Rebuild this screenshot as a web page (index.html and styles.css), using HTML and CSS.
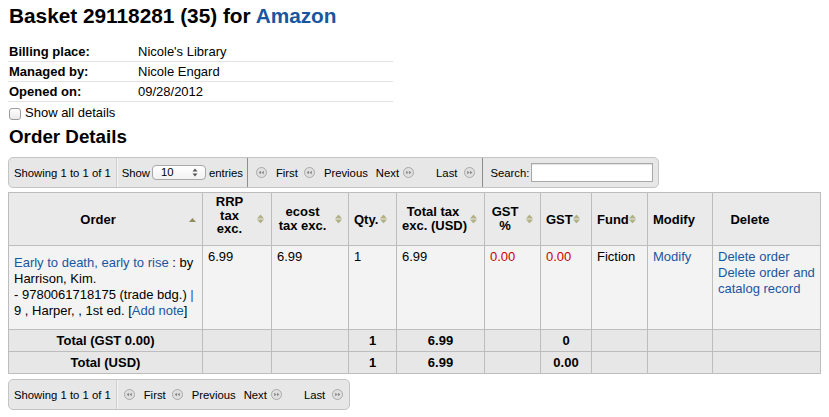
FILE: index.html
```html
<!DOCTYPE html>
<html>
<head>
<meta charset="utf-8">
<link rel="stylesheet" href="styles.css">
</head>
<body>
<div class="page">
  <h1 class="title">Basket 29118281 (35) for <a href="#" class="link">Amazon</a></h1>

  <div class="info">
    <div class="info-row"><span class="info-label">Billing place:</span><span>Nicole's Library</span></div>
    <div class="info-row"><span class="info-label">Managed by:</span><span>Nicole Engard</span></div>
    <div class="info-row"><span class="info-label">Opened on:</span><span>09/28/2012</span></div>
  </div>

  <label class="details-toggle"><input type="checkbox" class="check"> Show all details</label>

  <h2 class="subtitle">Order Details</h2>

  <div class="toolbar">
    <div class="seg seg-info">Showing 1 to 1 of 1</div>
    <div class="seg seg-length">Show <span class="select"><span class="select-val">10</span><svg class="select-arrows" width="6" height="9" viewBox="0 0 6 9"><path d="M3 0.5 L5.5 3.5 H0.5 Z M3 8.5 L5.5 5.5 H0.5 Z" fill="#555"/></svg></span> entries</div>
    <div class="seg seg-pager">
      <span class="pbtn pbtn-first"><svg class="picon" width="11" height="11" viewBox="0 0 11 11"><circle cx="5.5" cy="5.5" r="5" fill="#e0e0e0" stroke="#a9a9a9"/><path d="M2.6 5.5 L5 3.7 V7.3 Z M5.4 5.5 L7.8 3.7 V7.3 Z" fill="#8a8a8a"/></svg>First</span>
      <span class="pbtn pbtn-prev"><svg class="picon" width="11" height="11" viewBox="0 0 11 11"><circle cx="5.5" cy="5.5" r="5" fill="#e0e0e0" stroke="#a9a9a9"/><path d="M2.6 5.5 L5 3.7 V7.3 Z M5.4 5.5 L7.8 3.7 V7.3 Z" fill="#8a8a8a"/></svg>Previous</span>
      <span class="pbtn pbtn-next">Next<svg class="picon" width="11" height="11" viewBox="0 0 11 11"><circle cx="5.5" cy="5.5" r="5" fill="#e0e0e0" stroke="#a9a9a9"/><path d="M8.4 5.5 L6 3.7 V7.3 Z M5.6 5.5 L3.2 3.7 V7.3 Z" fill="#8a8a8a"/></svg></span>
      <span class="pbtn pbtn-last">Last<svg class="picon" width="11" height="11" viewBox="0 0 11 11"><circle cx="5.5" cy="5.5" r="5" fill="#e0e0e0" stroke="#a9a9a9"/><path d="M8.4 5.5 L6 3.7 V7.3 Z M5.6 5.5 L3.2 3.7 V7.3 Z" fill="#8a8a8a"/></svg></span>
    </div>
    <div class="seg seg-search">Search: <input type="text" class="search-input"></div>
  </div>

  <table class="orders">
    <colgroup>
      <col class="c-order"><col class="c-rrp"><col class="c-ecost"><col class="c-qty"><col class="c-total"><col class="c-gstp"><col class="c-gst"><col class="c-fund"><col class="c-modify"><col class="c-delete">
    </colgroup>
    <thead>
      <tr>
        <th class="sort">Order<svg class="sicon s-order" width="7" height="4" viewBox="0 0 7 4"><path d="M3.5 0 L7 4 H0 Z" fill="#8e8c60"/></svg></th>
        <th class="sort th-rrp">RRP<br>tax<br>exc.<svg class="sicon s-rrp" width="7" height="9" viewBox="0 0 7 9"><path d="M3.5 0 L7 4 H0 Z M3.5 9 L7 5 H0 Z" fill="#b2b085"/></svg></th>
        <th class="sort th-two">ecost<br>tax exc.<svg class="sicon s-ecost" width="7" height="9" viewBox="0 0 7 9"><path d="M3.5 0 L7 4 H0 Z M3.5 9 L7 5 H0 Z" fill="#b2b085"/></svg></th>
        <th class="sort">Qty.<svg class="sicon s-qty" width="7" height="9" viewBox="0 0 7 9"><path d="M3.5 0 L7 4 H0 Z M3.5 9 L7 5 H0 Z" fill="#b2b085"/></svg></th>
        <th class="sort th-two">Total tax<br>exc. (USD)<svg class="sicon s-total" width="7" height="9" viewBox="0 0 7 9"><path d="M3.5 0 L7 4 H0 Z M3.5 9 L7 5 H0 Z" fill="#b2b085"/></svg></th>
        <th class="sort th-two">GST<br>%<svg class="sicon s-gstp" width="7" height="9" viewBox="0 0 7 9"><path d="M3.5 0 L7 4 H0 Z M3.5 9 L7 5 H0 Z" fill="#b2b085"/></svg></th>
        <th class="sort th-left">GST<svg class="sicon s-gst" width="7" height="9" viewBox="0 0 7 9"><path d="M3.5 0 L7 4 H0 Z M3.5 9 L7 5 H0 Z" fill="#b2b085"/></svg></th>
        <th class="sort th-left">Fund<svg class="sicon s-fund" width="7" height="9" viewBox="0 0 7 9"><path d="M3.5 0 L7 4 H0 Z M3.5 9 L7 5 H0 Z" fill="#b2b085"/></svg></th>
        <th class="th-left">Modify</th>
        <th class="th-delete">Delete</th>
      </tr>
    </thead>
    <tbody>
      <tr class="row">
        <td><p class="order-desc"><a href="#" class="link">Early to death, early to rise</a> : by<br>Harrison, Kim.<br>- 9780061718175 (trade bdg.) <span class="link">|</span><br>9 , Harper, , 1st ed. [<a href="#" class="link">Add note</a>]</p></td>
        <td>6.99</td>
        <td>6.99</td>
        <td>1</td>
        <td>6.99</td>
        <td class="red">0.00</td>
        <td class="red">0.00</td>
        <td>Fiction</td>
        <td><a href="#" class="link">Modify</a></td>
        <td><a href="#" class="link">Delete order</a><br><a href="#" class="link">Delete order and<br>catalog record</a></td>
      </tr>
    </tbody>
    <tfoot>
      <tr class="total">
        <th>Total (GST 0.00)</th><td></td><td></td><td>1</td><td>6.99</td><td></td><td>0</td><td></td><td></td><td></td>
      </tr>
      <tr class="total">
        <th>Total (USD)</th><td></td><td></td><td>1</td><td>6.99</td><td></td><td>0.00</td><td></td><td></td><td></td>
      </tr>
    </tfoot>
  </table>

  <div class="toolbar toolbar-bottom">
    <div class="seg seg-info">Showing 1 to 1 of 1</div>
    <div class="seg seg-pager seg-pager-bottom">
      <span class="pbtn pbtn-first"><svg class="picon" width="11" height="11" viewBox="0 0 11 11"><circle cx="5.5" cy="5.5" r="5" fill="#e0e0e0" stroke="#a9a9a9"/><path d="M2.6 5.5 L5 3.7 V7.3 Z M5.4 5.5 L7.8 3.7 V7.3 Z" fill="#8a8a8a"/></svg>First</span>
      <span class="pbtn pbtn-prev"><svg class="picon" width="11" height="11" viewBox="0 0 11 11"><circle cx="5.5" cy="5.5" r="5" fill="#e0e0e0" stroke="#a9a9a9"/><path d="M2.6 5.5 L5 3.7 V7.3 Z M5.4 5.5 L7.8 3.7 V7.3 Z" fill="#8a8a8a"/></svg>Previous</span>
      <span class="pbtn pbtn-next">Next<svg class="picon" width="11" height="11" viewBox="0 0 11 11"><circle cx="5.5" cy="5.5" r="5" fill="#e0e0e0" stroke="#a9a9a9"/><path d="M8.4 5.5 L6 3.7 V7.3 Z M5.6 5.5 L3.2 3.7 V7.3 Z" fill="#8a8a8a"/></svg></span>
      <span class="pbtn pbtn-last">Last<svg class="picon" width="11" height="11" viewBox="0 0 11 11"><circle cx="5.5" cy="5.5" r="5" fill="#e0e0e0" stroke="#a9a9a9"/><path d="M8.4 5.5 L6 3.7 V7.3 Z M5.6 5.5 L3.2 3.7 V7.3 Z" fill="#8a8a8a"/></svg></span>
    </div>
  </div>
</div>
</body>
</html>
```

FILE: styles.css
```css
* { box-sizing: border-box; }

html, body {
  margin: 0;
  padding: 0;
  background: #ffffff;
}

body {
  font-family: "Liberation Sans", Arial, Helvetica, sans-serif;
  font-size: 13px;
  line-height: 16px;
  color: #000;
}

.page {
  padding: 0 8px;
  width: 829px;
}

.link {
  color: #1a56a0;
  text-decoration: none;
}

.title {
  margin: 3px 0 0 1px;
  font-size: 20.8px;
  line-height: 25px;
  font-weight: bold;
}

.info {
  margin-top: 14px;
  width: 385px;
}

.info-row {
  display: flex;
  padding: 2px 0 1px 1px;
  border-bottom: 1px solid #e2e2e2;
}

.info-label {
  width: 129px;
  font-weight: bold;
}

.details-toggle {
  display: flex;
  align-items: center;
  margin-top: 3px;
  padding-left: 1px;
  height: 16px;
}

.check {
  appearance: none;
  -webkit-appearance: none;
  width: 12px;
  height: 12px;
  margin: 1px 4px 0 0;
  border: 1px solid #9c9c9c;
  border-radius: 3px;
  background: linear-gradient(#ffffff, #e9e9e9);
}

.subtitle {
  margin: 5px 0 0 1px;
  font-size: 18.8px;
  line-height: 22px;
  font-weight: bold;
}

.toolbar {
  margin-top: 9px;
  width: 651px;
  height: 31px;
  display: flex;
  align-items: stretch;
  background: #e7e7e7;
  border: 1px solid #c4c4c4;
  border-radius: 5px;
  font-size: 11.3px;
}

.toolbar-bottom {
  margin-top: 5px;
  width: 342px;
}

.seg {
  display: flex;
  align-items: center;
  white-space: nowrap;
}

.seg-info {
  padding: 0 5px 0 5px;
  border-right: 1px solid #cfcfcf;
  box-shadow: 1px 0 0 #f6f6f6;
}

.seg-length {
  padding: 0 4px 0 5px;
  border-right: 1px solid #8e8e8e;
}

.select {
  display: inline-flex;
  align-items: center;
  justify-content: space-between;
  width: 54px;
  height: 15px;
  margin: 0 3px 0 2px;
  padding: 0 7px 0 8px;
  background: linear-gradient(#ffffff, #f2f2f2);
  border: 1px solid #a8a8a8;
  border-radius: 4px;
}

.select-val {
  font-size: 11.3px;
  line-height: 13px;
}

.seg-pager {
  padding: 0 7px 0 8px;
  border-right: 1px solid #8e8e8e;
}

.seg-pager-bottom {
  padding: 0 0 0 7px;
  border-right: none;
}

.pbtn {
  display: inline-flex;
  align-items: center;
}

.pbtn-first, .pbtn-prev { gap: 9px; }
.pbtn-prev { margin-left: 6px; }
.pbtn-next { gap: 4px; margin-left: 8px; }
.pbtn-last { gap: 7px; margin-left: 22px; }

.picon { display: block; }

.seg-search {
  padding: 0 3px 0 7px;
}

.search-input {
  width: 122px;
  height: 19px;
  margin: 0 0 0 2px;
  border: 1px solid #a9a9a9;
  box-shadow: inset 0 1px 1px rgba(0,0,0,0.12);
  background: #fff;
  padding: 0;
}

.orders {
  margin-top: 4px;
  width: 812px;
  table-layout: fixed;
  border-collapse: collapse;
}

.c-order { width: 194px; }
.c-rrp { width: 69px; }
.c-ecost { width: 77px; }
.c-qty { width: 48px; }
.c-total { width: 88px; }
.c-gstp { width: 56px; }
.c-gst { width: 51px; }
.c-fund { width: 56px; }
.c-modify { width: 65px; }
.c-delete { width: 108px; }

.orders th, .orders td {
  border: 1px solid #bdbdbd;
}

.orders thead th {
  position: relative;
  height: 53px;
  padding: 3px 20px 3px 5px;
  background: #eaeaea;
  font-weight: bold;
  text-align: center;
  vertical-align: middle;
  line-height: 15px;
  white-space: nowrap;
}

.orders thead .th-two { line-height: 14px; }

.orders thead .th-rrp {
  vertical-align: top;
  padding-top: 2px;
  line-height: 13.5px;
}

.orders thead .th-left { text-align: left; }

.orders thead .th-delete {
  padding-right: 38px;
}

.sicon {
  position: absolute;
  top: 50%;
  transform: translateY(-50%);
  right: 7px;
}

.s-order { right: 6px; margin-top: 1px; }
.s-ecost { right: 6px; }
.s-qty { right: 9px; }
.s-gst { right: 11px; }
.s-fund { right: 11px; }

.row td {
  background: #f3f3f3;
  padding: 3px 5px;
  vertical-align: top;
  line-height: 16px;
}

.order-desc {
  margin: 6px 0 7px;
}

.red { color: #cc0000; }

.total th, .total td {
  background: #e7e7e7;
  padding: 3px 5px;
  font-weight: bold;
  text-align: center;
  line-height: 15px;
}
```
